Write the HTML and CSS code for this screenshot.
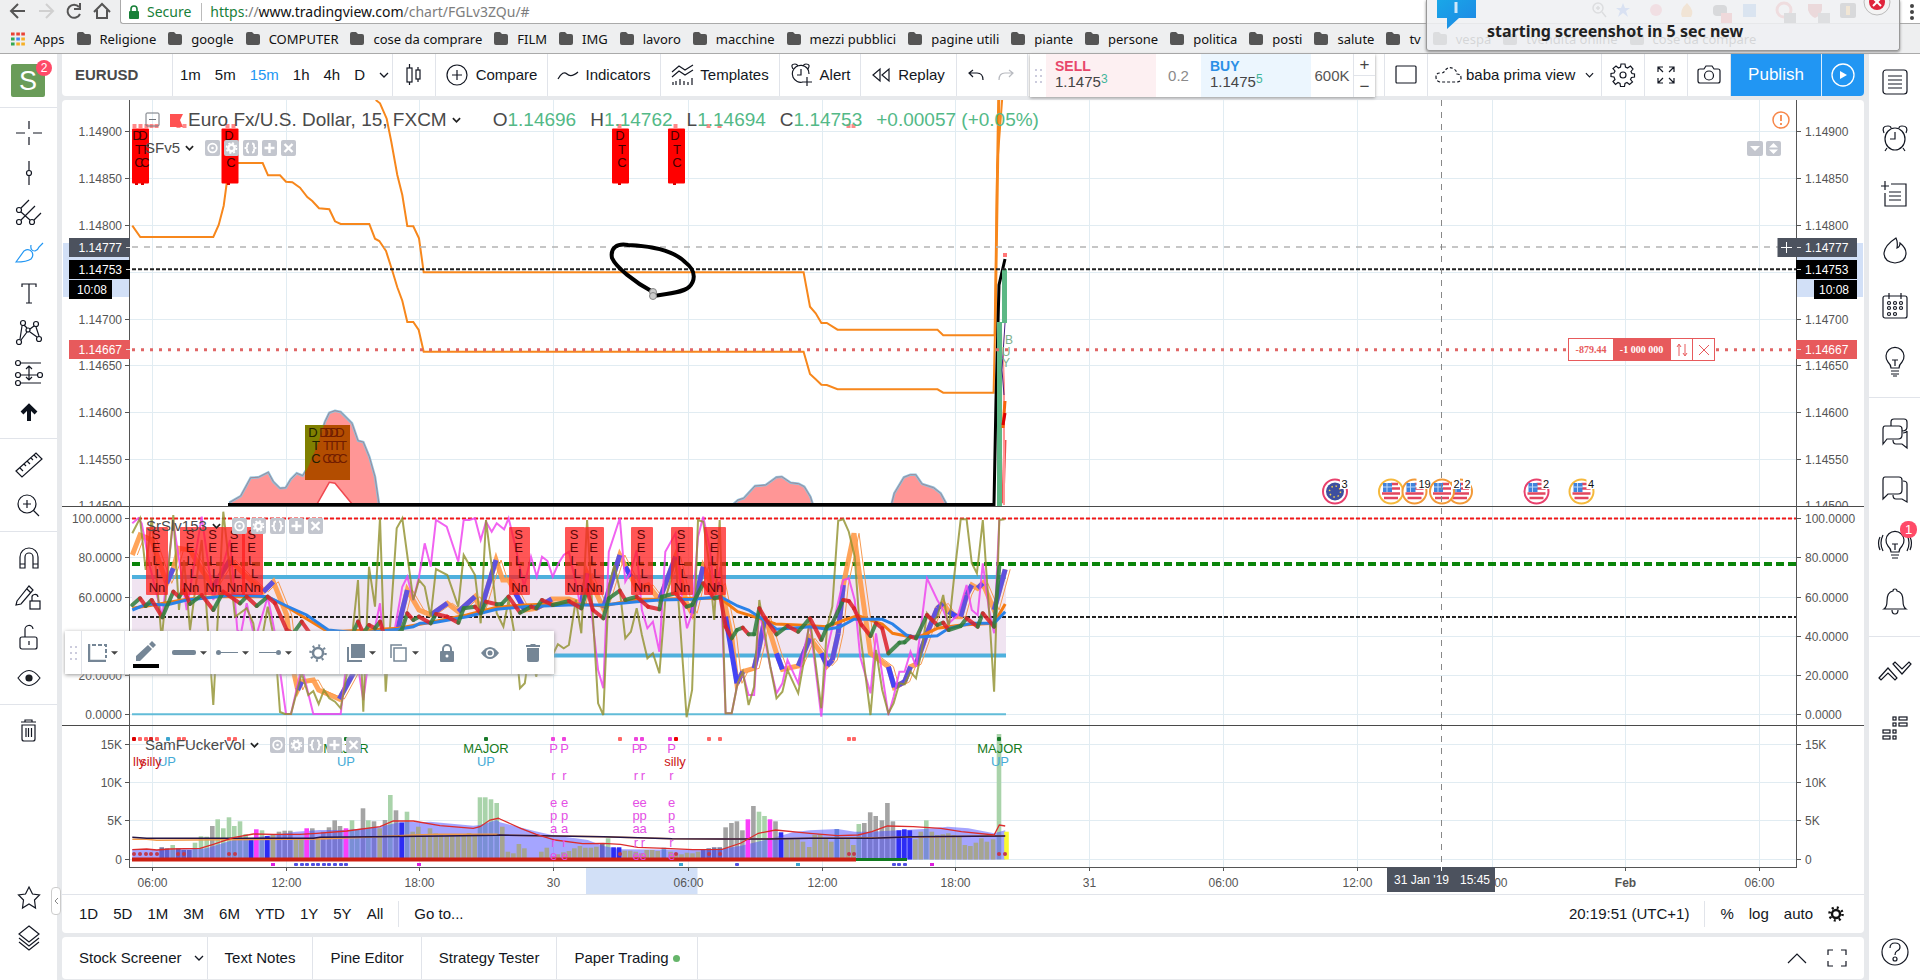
FILE: index.html
```html
<!DOCTYPE html>
<html lang="en">
<head>
<meta charset="utf-8">
<title>EURUSD chart</title>
<link rel="stylesheet" href="styles.css">
</head>
<body>
<svg class="defs" width="0" height="0" aria-hidden="true">
  <symbol id="folder" viewBox="0 0 14 13"><path d="M0 2q0-2 2-2h4l2 2h4q2 0 2 2v7q0 2-2 2H2q-2 0-2-2z" fill="#555"/></symbol>
  <symbol id="chev" viewBox="0 0 10 6"><path d="M1 1l4 4 4-4" fill="none" stroke="currentColor" stroke-width="1.3"/></symbol>
  <symbol id="chev-bold" viewBox="0 0 10 6"><path d="M1 1l4 4 4-4" fill="none" stroke="#222" stroke-width="1.9"/></symbol>
  <symbol id="caret" viewBox="0 0 8 4"><path d="M0 0h8L4 4z" fill="#444"/></symbol>
  <symbol id="l-eye" viewBox="0 0 15 16"><rect width="15" height="16" rx="2" fill="#c3c6ce"/><circle cx="7.5" cy="8" r="4.3" fill="none" stroke="#fff" stroke-width="1.8"/><circle cx="7.5" cy="8" r="1.3" fill="#fff"/></symbol>
  <symbol id="l-gear" viewBox="0 0 15 16"><rect width="15" height="16" rx="2" fill="#c3c6ce"/><circle cx="7.5" cy="8" r="3.2" fill="none" stroke="#fff" stroke-width="2.4"/><circle cx="7.5" cy="8" r="5" fill="none" stroke="#fff" stroke-width="1.6" stroke-dasharray="2 1.93"/></symbol>
  <symbol id="l-code" viewBox="0 0 15 16"><rect width="15" height="16" rx="2" fill="#c3c6ce"/><path d="M6 3.5Q4 3.5 4 5.5V7L2.5 8 4 9v1.5q0 2 2 2M9 3.500q2 0 2 2V7l1.5 1L11 9v1.5q0 2-2 2" fill="none" stroke="#fff" stroke-width="1.8"/></symbol>
  <symbol id="l-plus" viewBox="0 0 15 16"><rect width="15" height="16" rx="2" fill="#c3c6ce"/><path d="M7.5 3v10M2.5 8h10" stroke="#fff" stroke-width="2.4"/></symbol>
  <symbol id="l-x" viewBox="0 0 15 16"><rect width="15" height="16" rx="2" fill="#c3c6ce"/><path d="M3.5 4l8 8M11.5 4l-8 8" stroke="#fff" stroke-width="2.4"/></symbol>
</svg>

<header class="browser">
  <div class="address-row">
    <svg class="nav-icons" width="120" height="24" fill="none" stroke="#555" stroke-width="2">
      <path d="M25 11H12M18 4l-7 7 7 7"/><path d="M39 11h13M46 4l7 7-7 7" stroke="#d0d0d0"/>
      <path d="M79 7a6.5 6.5 0 1 0 1 7M80 3v6h-6"/><path d="M94 12l8-8 8 8M97 10v8h10v-8"/>
    </svg>
    <div class="address">
      <svg width="10" height="14"><rect y="6" width="10" height="8" rx="1" fill="#188038"/><path d="M2 7V4a3 3 0 0 1 6 0v3" fill="none" stroke="#188038" stroke-width="1.6"/></svg>
      <span class="secure">Secure</span><span class="url"><b class="g">https</b>://<b>www.tradingview.com</b>/chart/FGLv3ZQu/#</span>
    </div>
    <svg class="ext-icons" width="330" height="24" fill="none">
      <g stroke="#555" stroke-width="1.5"><circle cx="8" cy="8" r="5"/><path d="M12 12l4 5M6 8h4M8 6v4"/></g>
      <path d="M33 3l2 5h5l-4 3 2 6-5-4-5 4 2-6-4-3h5z" fill="#3975e8"/>
      <circle cx="66" cy="10" r="6" fill="#f67"/><path d="M97 3q8 8 4 14h-9q-3-7 5-14z" fill="#f80"/>
      <rect x="123" y="5" width="14" height="11" rx="4" fill="#333"/><rect x="131" y="13" width="11" height="10" fill="#e33"/>
      <rect x="153" y="4" width="13" height="13" fill="#48d"/><circle cx="194" cy="10" r="7" stroke="#e55" stroke-width="3"/><rect x="194" y="13" width="12" height="10" fill="#555"/>
      <path d="M218 4h14v6q-2 6-7 8-5-2-7-8z" fill="#c33"/><rect x="228" y="13" width="12" height="10" fill="#666"/>
      <rect x="250" y="3" width="16" height="15" rx="2" fill="#333"/><path d="M258 6v9" stroke="#f90" stroke-width="4"/>
      <g fill="#444"><circle cx="322" cy="6" r="2"/><circle cx="322" cy="12" r="2"/><circle cx="322" cy="18" r="2"/></g>
    </svg>
  </div>
  <nav class="bookmarks" aria-label="Bookmarks">
    <a href="#"><svg width="14" height="14"><path d="M0 2h3.6M0 7h0M5.300 2h3.600M10.300 2h3.600" stroke="#e94335" stroke-width="3"/><path d="M0 7h3.600M0 12h3.600" stroke="#34a853" stroke-width="3"/><path d="M5.300 7h3.600" stroke="#4285f4" stroke-width="3"/><path d="M10.300 7h3.600M5.300 12h3.600M10.300 12h3.600" stroke="#f6b026" stroke-width="3"/></svg>Apps</a>
    <a href="#"><svg width="14" height="13"><use href="#folder"/></svg>Religione</a>
    <a href="#"><svg width="14" height="13"><use href="#folder"/></svg>google</a>
    <a href="#"><svg width="14" height="13"><use href="#folder"/></svg>COMPUTER</a>
    <a href="#"><svg width="14" height="13"><use href="#folder"/></svg>cose da comprare</a>
    <a href="#"><svg width="14" height="13"><use href="#folder"/></svg>FILM</a>
    <a href="#"><svg width="14" height="13"><use href="#folder"/></svg>IMG</a>
    <a href="#"><svg width="14" height="13"><use href="#folder"/></svg>lavoro</a>
    <a href="#"><svg width="14" height="13"><use href="#folder"/></svg>macchine</a>
    <a href="#"><svg width="14" height="13"><use href="#folder"/></svg>mezzi pubblici</a>
    <a href="#"><svg width="14" height="13"><use href="#folder"/></svg>pagine utili</a>
    <a href="#"><svg width="14" height="13"><use href="#folder"/></svg>piante</a>
    <a href="#"><svg width="14" height="13"><use href="#folder"/></svg>persone</a>
    <a href="#"><svg width="14" height="13"><use href="#folder"/></svg>politica</a>
    <a href="#"><svg width="14" height="13"><use href="#folder"/></svg>posti</a>
    <a href="#"><svg width="14" height="13"><use href="#folder"/></svg>salute</a>
    <a href="#"><svg width="14" height="13"><use href="#folder"/></svg>tv</a>
    <a href="#"><svg width="14" height="13"><use href="#folder"/></svg>vespa</a>
    <a href="#"><svg width="14" height="13"><use href="#folder"/></svg>tvendita online</a>
    <a href="#"><svg width="14" height="13"><use href="#folder"/></svg>cose da compare</a>
  </nav>
  <div class="notice" role="status">
    <svg class="notice-icon" width="40" height="30"><defs><linearGradient id="nb" x1="0" y1="0" x2="1" y2="1"><stop offset="0" stop-color="#19a7e8"/><stop offset="1" stop-color="#1e86e4"/></linearGradient></defs><path d="M0 0h39v18H22L10 29V18H0z" fill="url(#nb)"/><path d="M19 2v11" stroke="#cfe8fa" stroke-width="3"/></svg>
    <strong>starting screenshot in 5 sec new</strong>
    <button class="notice-close" aria-label="Close"><svg width="28" height="28"><circle cx="14" cy="14" r="13" fill="#f4f4f4" stroke="#bbb"/><circle cx="14" cy="14" r="8" fill="#e0243c"/><path d="M10 10l8 8M18 10l-8 8" stroke="#fff" stroke-width="2"/></svg></button>
  </div>
</header>

<div class="app">
  <aside class="tools">
    <button class="avatar">S<span class="badge">2</span></button>
    <div class="tool-group">
      <button aria-label="Cross"><svg width="30" height="30" class="ln"><path d="M15 3v8M15 19v8M2 15h9M19 15h9"/></svg></button>
      <button aria-label="Line"><svg width="30" height="30" class="ln"><path d="M15 3v9M15 18v9"/><circle cx="15" cy="15" r="2.5"/></svg></button>
      <button aria-label="Pitchfork"><svg width="30" height="30" class="ln"><circle cx="5" cy="12" r="2.5"/><circle cx="5" cy="24" r="2.5"/><circle cx="18" cy="24" r="2.5"/><path d="M7 10l8-8M7 22L21 8M20 22l7-7M7 14l9 8"/></svg></button>
      <button aria-label="Brush"><svg width="30" height="30" class="ln blue"><path d="M2 24L10 13q5-3 8 1 2 4-1 7-4 3-15 3zM17 7q-1 6 4 6 3-1 4-4l4-4"/></svg></button>
      <button aria-label="Text"><svg width="30" height="30" class="ln"><path d="M8 9V6h14v3M15 6v19M12 25h6"/></svg></button>
      <button aria-label="Patterns"><svg width="30" height="30" class="ln"><circle cx="9" cy="5" r="2.5"/><circle cx="22" cy="6" r="2.5"/><circle cx="5" cy="24" r="2.5"/><circle cx="25" cy="21" r="2.5"/><circle cx="14" cy="12" r="2"/><path d="M8 8L6 21M10 7l3 3M16 11l4-3M22 9l3 9M13 14l-6 8M16 14l7 5"/></svg></button>
      <button aria-label="Prediction"><svg width="30" height="30" class="ln"><circle cx="4" cy="5" r="2.5"/><circle cx="4" cy="17" r="2.5"/><circle cx="26" cy="17" r="2.5"/><circle cx="4" cy="25" r="2.5"/><path d="M7 5h20M7 17h17M7 25h20M15 8v13M12 11l3-3 3 3M12 19l3 3 3-3"/></svg></button>
      <button aria-label="Arrow"><svg width="30" height="30"><path d="M15 23V9M8 15l7-7 7 7" fill="none" stroke="#0c121c" stroke-width="4"/></svg></button>
    </div>
    <div class="tool-group">
      <button aria-label="Measure"><svg width="30" height="30" class="ln"><path d="M2 21L22 3l6 6L8 27zM6 18l3 3M10 14l2 2M13 11l3 3M17 8l2 2M20 5l3 3"/></svg></button>
      <button aria-label="Zoom in"><svg width="30" height="30" class="ln"><circle cx="13" cy="14" r="9"/><path d="M19 20l6 6M9 14h8M13 10v8"/></svg></button>
    </div>
    <div class="tool-group">
      <button aria-label="Magnet"><svg width="30" height="30" class="ln"><path d="M6 25V14a9 9 0 0 1 18 0v11h-5V14a4 4 0 0 0-8 0v11zM6 21h5M19 21h5"/></svg></button>
      <button aria-label="Stay in drawing mode"><svg width="30" height="30" class="ln"><path d="M3 18L15 3l4 4L7 21l-5 1zM13 6l4 4"/><rect x="16" y="18" width="10" height="8"/><path d="M18 18v-3a3 3 0 0 1 6-1"/></svg></button>
      <button aria-label="Lock drawings"><svg width="30" height="30" class="ln"><rect x="6" y="14" width="17" height="12" rx="2"/><path d="M11 14V7a4 4 0 0 1 8-1M15 18v4"/></svg></button>
      <button aria-label="Hide drawings"><svg width="30" height="30" class="ln"><path d="M4 15q11-15 22 0-11 15-22 0z"/><circle cx="15" cy="15" r="3" fill="#222"/></svg></button>
    </div>
    <div class="tool-group">
      <button aria-label="Remove"><svg width="30" height="30" class="ln"><path d="M7 6h15M11 6V4h7v2M8 9v14q0 2 2 2h9q2 0 2-2V9zM12 12v9M14.5 12v9M17.5 12v9"/></svg></button>
    </div>
    <div class="tool-group end">
      <button aria-label="Favorites"><svg width="30" height="30" class="ln"><path d="M15 4l3.500 7 7 1-5 5 1 8-6.500-4-6.500 4 1-8-5-5 7-1z"/></svg></button>
      <button aria-label="Object tree"><svg width="30" height="30" class="ln"><path d="M15 3l10 8-10 8-10-8zM5 15l10 8 10-8M5 19l10 8 10-8"/></svg></button>
    </div>
    <button class="collapse" aria-label="Collapse"><svg width="5" height="8"><path d="M4 1L1 4l3 3" fill="none" stroke="#888"/></svg></button>
  </aside>

  <main class="main">
    <div class="topbar">
      <div class="cell symbol"><strong>EURUSD</strong></div>
      <div class="cell intervals"><button>1m</button><button>5m</button><button class="on">15m</button><button>1h</button><button>4h</button><button>D</button><button aria-label="More intervals"><svg width="10" height="6"><use href="#chev"/></svg></button></div>
      <button class="cell w43" aria-label="Candles"><svg width="18" height="26" class="ln"><rect x="2" y="6" width="5" height="14"/><rect x="11" y="8" width="4" height="9"/><path d="M4.5 2v4M4.5 20v3M13 5v3M13 17v3"/></svg></button>
      <button class="cell w112"><svg width="22" height="22" class="ln"><circle cx="11" cy="11" r="10"/><path d="M6 11h10M11 6v10"/></svg>Compare</button>
      <button class="cell w114"><svg width="22" height="12" class="ln"><path d="M1 10Q6 1 10 5t11-2"/></svg>Indicators</button>
      <button class="cell w118"><svg width="23" height="22" class="ln"><path d="M1 8l7-6 6 4 8-5M1 13l7-6 6 4 8-5M2 21v-3M5 21v-4M9 21v-6M13 21v-4M17 21v-3M21 21v-7"/></svg>Templates</button>
      <button class="cell w81"><svg width="23" height="24" class="ln"><path d="M17 5a8.5 8.5 0 1 0-4 14M19 11q0-4-2-6M11 6v6H7M3 6Q0 1 5 1q2 0 3 2M13 3q1-2 3-2 5 0 2 5M12 19h10M17 14v9"/></svg>Alert</button>
      <button class="cell w97"><svg width="18" height="14" class="ln"><path d="M8 1v12L1 7zM17 1v12l-7-6z"/></svg>Replay</button>
      <div class="cell history"><button aria-label="Undo"><svg width="16" height="12" class="ln"><path d="M5 1L1 4l4 4M1 4h8q6 0 6 7"/></svg></button><button aria-label="Redo"><svg width="16" height="12" class="ln faint"><path d="M11 1l4 3-4 4M15 4H7q-6 0-6 7"/></svg></button></div>
      <div class="spacer"></div>
      <button class="cell w43 first" aria-label="Layout"><svg width="22" height="20" class="ln"><rect x="1" y="1" width="20" height="17" rx="1"/></svg></button>
      <button class="cell layout"><svg width="27" height="18" class="ln" stroke-dasharray="3 2"><path d="M5 16q-4-1-4-5t4-4q3 0 4-1 4-7 10-3 3 2 3 5 4 0 4 4t-4 4z"/></svg>baba prima view<svg class="push" width="9" height="6"><use href="#chev"/></svg></button>
      <button class="cell w43" aria-label="Settings"><svg width="24" height="24" class="ln"><circle cx="12" cy="12" r="3"/><path d="M10 1h4l.5 3 2 1 3-2 2.5 3-2 2.500 1 2 2.500.5v3l-3 .5-1 2 2 2.500-3 2.500-2.500-2-2 1-.5 3h-4l-.5-3-2-1-2.500 2-2.500-3 2-2-1-2.500-3-.5v-3l3-.5 1-2-2-2.500 3-2.500 2.500 2 2-1z"/></svg></button>
      <button class="cell w43" aria-label="Fullscreen"><svg width="20" height="20" class="ln"><path d="M2 7V2h5M2 2l5 5M13 2h5v5M18 2l-5 5M2 13v5h5M2 18l5-5M18 13v5h-5M18 18l-5-5"/></svg></button>
      <button class="cell w43" aria-label="Snapshot"><svg width="24" height="20" class="ln"><path d="M3 4h4l2-3h6l2 3h4q2 0 2 2v10q0 2-2 2H3q-2 0-2-2V6q0-2 2-2z"/><circle cx="12" cy="10.5" r="4.5"/></svg></button>
      <button class="publish">Publish</button>
      <button class="stream" aria-label="Start stream"><svg width="24" height="24"><circle cx="12" cy="12" r="11" fill="none" stroke="#fff" stroke-width="1.3"/><path d="M9 8l7 4-7 4z" fill="#fff"/></svg></button>

      <div class="trade">
        <svg class="grip" width="9" height="16"><path d="M2 1v16M7 1v16" stroke="#ccd" stroke-width="2" stroke-dasharray="2 4"/></svg>
        <button class="sell"><b>SELL</b><span>1.1475<sup>3</sup></span></button>
        <span class="spread">0.2</span>
        <button class="buy"><b>BUY</b><span>1.1475<sup>5</sup></span></button>
        <input class="qty" aria-label="Quantity" value="600K">
        <span class="steps"><button aria-label="Increase">+</button><button aria-label="Decrease">−</button></span>
      </div>
    </div>

    <section class="card">
      <div class="chart">
        <svg id="axis-left" class="axis"></svg>
        <svg id="plot" class="plot"></svg>
        <svg id="axis-right" class="axis"></svg>

        <div class="legend legend-main">
          <svg width="16" height="16"><rect x="1" y="1" width="13" height="13" rx="1" fill="none" stroke="#70757d"/><path d="M4 7.5h7" stroke="#70757d"/></svg>
          <svg class="flag" width="13" height="13"><path d="M0 0h13l-3 6 3 7H0z" fill="#ff5252"/></svg>
          <span>Euro Fx/U.S. Dollar, 15, FXCM</span><svg class="dd" width="9" height="6"><use href="#chev-bold"/></svg>
          <span class="ohlc">O<i>1.14696</i></span><span class="ohlc">H<i>1.14762</i></span><span class="ohlc">L<i>1.14694</i></span><span class="ohlc">C<i>1.14753</i></span><span class="ohlc"><i>+0.00057 (+0.05%)</i></span>
        </div>
        <div class="legend legend-1"><span>SFv5</span><svg class="dd" width="9" height="6"><use href="#chev-bold"/></svg>
          <button aria-label="Hide"><svg width="15" height="16"><use href="#l-eye"/></svg></button><button aria-label="Format"><svg width="15" height="16"><use href="#l-gear"/></svg></button><button aria-label="Source"><svg width="15" height="16"><use href="#l-code"/></svg></button><button aria-label="Add"><svg width="15" height="16"><use href="#l-plus"/></svg></button><button aria-label="Remove"><svg width="15" height="16"><use href="#l-x"/></svg></button></div>
        <div class="legend legend-2"><span>SrSlv153</span><svg class="dd" width="9" height="6"><use href="#chev-bold"/></svg>
          <button aria-label="Hide"><svg width="15" height="16"><use href="#l-eye"/></svg></button><button aria-label="Format"><svg width="15" height="16"><use href="#l-gear"/></svg></button><button aria-label="Source"><svg width="15" height="16"><use href="#l-code"/></svg></button><button aria-label="Add"><svg width="15" height="16"><use href="#l-plus"/></svg></button><button aria-label="Remove"><svg width="15" height="16"><use href="#l-x"/></svg></button></div>
        <div class="legend legend-3"><span>SamFUckerVol</span><svg class="dd" width="9" height="6"><use href="#chev-bold"/></svg>
          <button aria-label="Hide"><svg width="15" height="16"><use href="#l-eye"/></svg></button><button aria-label="Format"><svg width="15" height="16"><use href="#l-gear"/></svg></button><button aria-label="Source"><svg width="15" height="16"><use href="#l-code"/></svg></button><button aria-label="Add"><svg width="15" height="16"><use href="#l-plus"/></svg></button><button aria-label="Remove"><svg width="15" height="16"><use href="#l-x"/></svg></button></div>

        <svg class="warn" width="20" height="20"><circle cx="10" cy="10" r="8" fill="none" stroke="#f7874a" stroke-width="1.5"/><path d="M10 5v6M10 13v2" stroke="#f7874a" stroke-width="1.8"/></svg>
        <svg class="pane-btns" width="34" height="15"><rect width="16" height="15" rx="2" fill="#c3c6ce"/><rect x="19" width="15" height="15" rx="2" fill="#c3c6ce"/><path d="M3 5h10l-5 5zM22 6.500h9L26.500 2zM22 8.500h9L26.500 13z" fill="#fff"/></svg>

        <div class="position"><span>-879.44</span><b>-1 000 000</b><button aria-label="Reverse"><svg width="12" height="14"><path d="M3 13V2M1 4l2-3 2 3M9 1v11M7 10l2 3 2-3" fill="none" stroke="#e75a5c"/></svg></button><button aria-label="Close position"><svg width="12" height="12"><path d="M1 1l10 10M11 1L1 11" stroke="#e75a5c"/></svg></button></div>

        <div class="drawbar">
          <svg class="grip" width="9" height="16"><path d="M2 1v16M7 1v16" stroke="#ccd" stroke-width="2" stroke-dasharray="2 4"/></svg>
          <button aria-label="Template"><svg width="19" height="18"><path d="M1 0v17h17" fill="none" stroke="#758696" stroke-width="2.5"/><path d="M4 1h14v13" fill="none" stroke="#758696" stroke-width="2" stroke-dasharray="4 2"/></svg><svg width="7" height="4"><use href="#caret"/></svg></button>
          <button aria-label="Line color" class="pencil"><svg width="20" height="20"><path d="M0 20v-5L12 4l4 4L4 20zM13 3l3-3 4 4-3 3z" fill="#758696"/></svg></button>
          <button aria-label="Thickness"><svg width="24" height="5"><rect width="24" height="5" rx="2" fill="#758696"/></svg><svg width="7" height="4"><use href="#caret"/></svg></button>
          <button aria-label="Left end"><svg width="22" height="5"><circle cx="2.5" cy="2.5" r="2.5" fill="#758696"/><path d="M4 2.5h18" stroke="#758696"/></svg><svg width="7" height="4"><use href="#caret"/></svg></button>
          <button aria-label="Right end"><svg width="22" height="5"><circle cx="19.5" cy="2.5" r="2.5" fill="#758696"/><path d="M0 2.5h18" stroke="#758696"/></svg><svg width="7" height="4"><use href="#caret"/></svg></button>
          <button aria-label="Format"><svg width="18" height="18"><circle cx="9" cy="9" r="5" fill="none" stroke="#758696" stroke-width="2.5"/><circle cx="9" cy="9" r="7.5" fill="none" stroke="#758696" stroke-width="2.5" stroke-dasharray="2 3.89"/></svg></button>
          <button aria-label="Order"><svg width="18" height="18"><rect x="4" width="14" height="14" fill="#758696"/><path d="M1 3v14h14" fill="none" stroke="#758696" stroke-width="2"/></svg><svg width="7" height="4"><use href="#caret"/></svg></button>
          <button aria-label="Clone"><svg width="18" height="18" fill="none" stroke="#758696" stroke-width="1.5"><rect x="4" y="4" width="12" height="13"/><path d="M1 14V1h11"/></svg><svg width="7" height="4"><use href="#caret"/></svg></button>
          <button aria-label="Lock"><svg width="14" height="18"><rect y="7" width="14" height="11" rx="1" fill="#758696"/><path d="M3 8V5a4 4 0 0 1 8 0v3" fill="none" stroke="#758696" stroke-width="2"/><circle cx="7" cy="12" r="1.5" fill="#fff"/></svg></button>
          <button aria-label="Hide"><svg width="18" height="12"><path d="M0 6q9-12 18 0-9 12-18 0z" fill="#758696"/><circle cx="9" cy="6" r="4" fill="#fff"/><circle cx="9" cy="6" r="2.5" fill="#758696"/></svg></button>
          <button aria-label="Delete"><svg width="14" height="18"><path d="M0 1h4l1-1h4l1 1h4v2H0zM1 4h12v12q0 2-2 2H3q-2 0-2-2z" fill="#758696"/></svg></button>
        </div>
      </div>

      <div class="ranges">
        <button>1D</button><button>5D</button><button>1M</button><button>3M</button><button>6M</button><button>YTD</button><button>1Y</button><button>5Y</button><button>All</button>
        <i class="rule"></i><button class="goto">Go to...</button>
        <span class="clock">20:19:51 (UTC+1)</span><i class="rule"></i><button>%</button><button>log</button><button>auto</button>
        <button aria-label="Scale settings"><svg width="16" height="16"><circle cx="8" cy="8" r="4" fill="none" stroke="#111" stroke-width="2.4"/><circle cx="8" cy="8" r="6.5" fill="none" stroke="#111" stroke-width="2.6" stroke-dasharray="2 3.105"/></svg></button>
      </div>
    </section>

    <nav class="tabs">
      <button>Stock Screener<svg class="gap" width="10" height="6"><use href="#chev"/></svg></button><button>Text Notes</button><button>Pine Editor</button><button>Strategy Tester</button><button>Paper Trading<i class="dot"></i></button>
      <button class="bare push" aria-label="Expand"><svg width="20" height="12" class="ln"><path d="M1 11l9-9 9 9"/></svg></button>
      <button class="bare" aria-label="Maximize"><svg width="20" height="18" class="ln"><path d="M1 6V1h5M14 1h5v5M1 12v5h5M19 12v5h-5"/></svg></button>
    </nav>
  </main>

  <aside class="side">
    <div class="side-group">
      <button aria-label="Watchlist"><svg width="28" height="28" class="ln"><rect x="2" y="2" width="24" height="24" rx="3"/><path d="M7 8h14M7 12h14M7 16h14M7 20h14"/></svg></button>
      <button aria-label="Alerts"><svg width="28" height="28" class="ln"><ellipse cx="14" cy="15" rx="10" ry="11"/><path d="M14 8v7H9M3 9Q0 2 7 2q3 0 3 2M25 9q3-7-4-7-3 0-3 2M6 24l-2 3M22 24l2 3"/></svg></button>
      <button aria-label="Data window"><svg width="28" height="28" class="ln"><path d="M10 4h15v22H4V13M0 6h8M4 1v9M8 12h12M8 16h12M8 20h12"/></svg></button>
      <button aria-label="Hotlists"><svg width="28" height="28" class="ln"><path d="M15 2q2 4 1 10 3-1 3-5 6 5 6 10 0 9-11 10Q3 26 3 17q1-8 12-15z"/></svg></button>
      <button aria-label="Calendar"><svg width="28" height="28" class="ln"><rect x="2" y="4" width="24" height="22" rx="2"/><path d="M8 1v6M20 1v6"/><g><circle cx="8" cy="11" r="1.5"/><circle cx="14" cy="11" r="1.5"/><circle cx="20" cy="11" r="1.5"/><circle cx="8" cy="16" r="1.5"/><circle cx="14" cy="16" r="1.5"/><circle cx="20" cy="16" r="1.5"/><circle cx="8" cy="22" r="1.5"/><circle cx="14" cy="22" r="1.5"/></g></svg></button>
      <button aria-label="My ideas"><svg width="28" height="28" class="ln"><path d="M10 20q0-3-3-6a9 9 0 1 1 14 0q-3 3-3 6zM10 23h8M10 26h8M11 12h6M14 12v6M12 28h4"/></svg></button>
    </div>
    <div class="side-group">
      <button aria-label="Public chats"><svg width="28" height="30" class="ln"><path d="M10 8V4q0-3 3-3h10q3 0 3 3v5q0 4-5 4M4 8h14q3 0 3 3v6q0 4-4 4H6l-4 5V11q0-3 2-3zM22 15q3 0 4-2v17l-5-4h-6q-3 0-3-4"/></svg></button>
      <button aria-label="Private chats"><svg width="28" height="28" class="ln"><path d="M4 2h14q3 0 3 3v10q0 4-4 4H7l-5 5V5q0-3 2-3zM22 6q4 0 4 3v18l-5-3h-6q-3 0-3-4"/></svg></button>
      <button aria-label="Ideas stream"><svg width="34" height="30" class="ln"><path d="M13 22q0-3-3-6a9 9 0 1 1 14 0q-3 3-3 6zM13 25h8M14 28h6M14 14h6M17 14v6M5 5q-4 8 0 16M2 7q-3 6 0 13M29 5q4 8 0 16M32 7q3 6 0 13"/></svg><span class="badge">1</span></button>
      <button aria-label="Notifications"><svg width="28" height="28" class="ln"><path d="M3 22q3-2 3-8 0-9 6-10 0-2 2-2t2 2q6 1 6 10 0 6 3 8zM11 23q0 4 3 4t3-4"/></svg></button>
    </div>
    <div class="side-group">
      <button aria-label="Order panel"><svg width="34" height="24" class="ln"><path d="M1 18l9-10 9 10-2 2-7-7-7 7zM15 4l2-2 7 7 7-7 2 2-9 10z"/></svg></button>
      <button aria-label="DOM"><svg width="28" height="28" class="ln"><g><rect x="12" y="3" width="3" height="3"/><rect x="18" y="3" width="8" height="3"/><rect x="12" y="9" width="3" height="3"/><rect x="18" y="9" width="8" height="3"/><rect x="2" y="16" width="7" height="3"/><rect x="12" y="16" width="3" height="3"/><rect x="2" y="22" width="7" height="3"/><rect x="12" y="22" width="3" height="3"/></g></svg></button>
    </div>
    <div class="side-group end"><button aria-label="Help"><svg width="30" height="30" class="ln"><circle cx="15" cy="15" r="13"/><path d="M10 11q0-5 5-5t5 4q0 3-3 4-2 1-2 4"/><circle cx="15" cy="22" r="2"/></svg></button></div>
  </aside>
</div>
<script src="chart.js"></script>
</body>
</html>
```
FILE: styles.css
```css
* { box-sizing: border-box; }
body { margin: 0; height: 100vh; display: flex; flex-direction: column; overflow: hidden; background: #e7e9ec; color: #131722; font: 15px/18px "Liberation Sans", Arial, sans-serif; }
button, input { font: inherit; color: inherit; background: none; border: 0; padding: 0; margin: 0; }
button { display: flex; align-items: center; justify-content: center; white-space: nowrap; flex: none; }
svg { flex: none; display: block; }
.defs { position: absolute; }
.ln { fill: none; stroke: #131722; stroke-width: 1.2; overflow: visible; }
.ln.blue { stroke: #2196f3; }
.ln.faint { stroke: #b8bac0; }
.push { margin-left: auto; }

.browser { position: relative; flex: none; background: #eeeff0; border-bottom: 1px solid #aaa; font-family: "Noto Sans", sans-serif; }
.address-row { height: 24px; display: flex; overflow: hidden; }
.address { flex: 1; background: #fff; border: 1px solid #aaa; border-top: 0; border-right: 0; border-radius: 0 0 0 3px; display: flex; align-items: center; padding-left: 8px; }
.secure { color: #188038; margin-left: 8px; padding-right: 10px; border-right: 1px solid #bbb; font-size: 14px; }
.url { color: #7d7d7d; margin-left: 8px; font-size: 14px; }
.url b { font-weight: 400; color: #111; }
.url b.g { color: #188038; }
.ext-icons { background: #fff; border-bottom: 1px solid #aaa; margin-left: -1px; }
.bookmarks { height: 29px; display: flex; align-items: center; gap: 12px; padding-left: 11px; overflow: hidden; font-size: 13px; }
.bookmarks a { display: flex; align-items: center; gap: 9px; color: #111; text-decoration: none; white-space: nowrap; }
.notice { position: absolute; z-index: 5; right: 20px; top: 0; width: 474px; height: 51px; background: rgba(239, 240, 242, .88); border: 1px solid #999; border-top: 0; border-radius: 0 0 3px 3px; box-shadow: 0 1px 3px #888; display: flex; align-items: flex-start; padding: 0 0 0 10px; gap: 10px; }
.notice strong { font-size: 16px; line-height: 20px; margin-top: 21px; color: #222; }
.notice-close { position: absolute; right: 8px; top: -12px; }

.app { flex: 1; min-height: 0; display: flex; }
.tools, .side { background: #fff; flex: none; display: flex; flex-direction: column; align-items: stretch; position: relative; }
.tools { width: 57px; margin-right: 5px; }
.avatar { position: relative; width: 34px; height: 33px; margin: 10px 0 10px 11px; background: #6a9c59; color: #fff; font-size: 27px; border-radius: 2px; }
.badge { position: absolute; right: -7px; top: -4px; width: 16px; height: 16px; border-radius: 8px; background: #ff4a68; color: #fff; font-size: 12px; line-height: 16px; text-align: center; }
.tool-group { border-top: 1px solid #e1e4ea; padding: 6px 0; }
.tool-group button { width: 57px; height: 40px; }
.avatar + .tool-group { padding: 5px 0; }
.tool-group.end { margin-top: auto; border: 0; padding-bottom: 22px; }
.collapse { position: absolute; right: -4px; top: 833px; width: 10px; height: 28px; background: #fff; border: 1px solid #ccc; border-radius: 4px; }

.main { flex: 1; min-width: 0; display: flex; flex-direction: column; gap: 4px; padding-bottom: 1px; }
.topbar { position: relative; height: 42px; flex: none; display: flex; background: #fff; border-radius: 0 0 4px 4px; }
.cell { border-right: 1px solid #e1e4ea; display: flex; align-items: center; justify-content: center; gap: 8px; flex: none; }
.symbol { width: 111px; justify-content: flex-start; padding-left: 13px; color: #4a4a4a; }
.intervals { width: 220px; gap: 14px; padding: 0 0 0 4px; }
.intervals .on { color: #2196f3; }
.w43 { width: 43px; }
.w112 { width: 112px; }
.w114 { width: 113px; gap: 6px; }
.w118 { width: 119px; gap: 6px; }
.w81 { width: 81px; gap: 7px; }
.w97 { width: 96px; }
.history { width: 71px; gap: 14px; padding-right: 2px; }
.spacer { flex: 1; }
.first { border-left: 1px solid #e1e4ea; width: 44px; }
.layout { width: 174px; padding: 0 7px; gap: 4px; }
.publish { width: 91px; background: #2196f3; color: #fff; font-size: 17px; border-right: 1px solid #d9edfd; }
.stream { width: 42px; background: #2196f3; border-radius: 0 0 4px 0; }
.trade { position: absolute; left: 968px; top: 0; width: 345px; height: 43px; background: #fff; display: flex; align-items: stretch; box-shadow: 0 1px 3px #999; }
.grip { align-self: center; margin: 0 3px 0 4px; }
.trade button { color: #444; }
.trade .sell, .trade .buy { width: 110px; flex-direction: column; align-items: flex-start; line-height: 16px; padding: 0 0 3px 9px; background: #fdf0f2; }
.trade .buy { background: #ecf6fe; }
.sell b { color: #e8476a; font-size: 14px; }
.buy b { color: #2b8fe6; font-size: 14px; }
.trade sup { font-size: 12px; line-height: 8px; color: #3fb59a; vertical-align: 4px; }
.spread { width: 45px; color: #8a8a8a; line-height: 43px; text-align: center; }
.qty { width: 42px; text-align: center; color: #555; }
.steps { display: flex; flex-direction: column; width: 22px; border-left: 1px solid #e1e4ea; }
.steps button { flex: 1; font-size: 17px; }
.steps button + button { border-top: 1px solid #e1e4ea; }

.card { flex: 1; min-height: 0; background: #fff; border-radius: 4px; display: flex; flex-direction: column; overflow: hidden; }
.chart { flex: 1; min-height: 0; position: relative; display: flex; }
.axis { width: 68px; height: 100%; }
.plot { flex: 1; min-width: 0; height: 100%; }
.chart text { fill: #555; font-size: 12px; }
.legend { position: absolute; display: flex; align-items: center; color: #4a4a4a; height: 20px; white-space: nowrap; }
.legend .dd { margin-left: 5px; }
.legend button { margin-left: 4px; }
.legend .dd + button { margin-left: 11px; }
.legend-main { left: 83px; top: 10px; font-size: 19px; }
.flag { margin: 0 5px 0 9px; }
.legend i { font-style: normal; color: #53b987; }
.ohlc { margin-left: 14px; }
.dd + .ohlc { margin-left: 32px; }
.legend-1 { left: 83px; top: 38px; }
.legend-2 { left: 84px; top: 416px; }
.legend-3 { left: 83px; top: 635px; }
.warn { position: absolute; right: 73px; top: 10px; }
.pane-btns { position: absolute; right: 83px; top: 41px; }
.position { position: absolute; left: 1506px; top: 238px; height: 23px; display: flex; border: 1px solid #e75a5c; background: #fff; font: 10px/21px "Liberation Serif", serif; color: #e75a5c; }
.position span { width: 44px; text-align: center; font-weight: 700; }
.position b { width: 57px; background: #e75a5c; color: #fff; text-align: center; }
.position button { width: 22px; border-left: 1px solid #e75a5c; }
.drawbar { position: absolute; left: 3px; top: 531px; height: 43px; background: #fff; display: flex; box-shadow: 0 1px 4px #999; }
.drawbar button { width: 43px; border-left: 1px solid #e1e4ea; gap: 4px; }
.drawbar .pencil { position: relative; }
.pencil::after { content: ""; position: absolute; left: 8px; right: 8px; bottom: 6px; height: 4px; background: #000; }
.pencil svg { margin-bottom: 4px; }

.ranges { height: 39px; flex: none; border-top: 1px solid #e1e4ea; display: flex; align-items: center; gap: 15px; padding: 0 20px 0 17px; }
.rule { width: 1px; height: 26px; background: #e1e4ea; }
.clock { margin-left: auto; }
.tabs { height: 42px; flex: none; background: #fff; border-radius: 4px; display: flex; }
.tabs button { padding: 0 17px; border-right: 1px solid #e1e4ea; }
.tabs button:first-child { padding-right: 3px; }
.tabs .bare { border: 0; padding: 0 17px 0 3px; }
.gap { margin-left: 12px; }
.dot { width: 7px; height: 7px; border-radius: 4px; background: #66b56a; margin-left: 4px; }
.side { width: 51px; margin-left: 5px; }
.side-group button { position: relative; width: 52px; height: 56px; }
.side-group + .side-group { border-top: 1px solid #e1e4ea; margin-top: 7px; padding-top: 7px; }
.side-group .badge { right: 4px; top: 4px; width: 17px; height: 17px; line-height: 17px; font-size: 13px; }
.side .end { margin-top: auto; border: 0; }
```
FILE: chart.js
```javascript
const el = (tag, attrs = {}, body = '') =>
  `<${tag} ${Object.entries(attrs).map(([k, v]) => `${k}="${v}"`).join(' ')}>${body}</${tag}>`;

// Series are stored in two halves, each in its own fine grid: [x scale, x origin, y origin].
const A1 = [3, 0, 100], B1 = [2.8, 480, 100];
const A2 = [3, 0, 500], B2 = [2.904, 500, 500];
const A3 = [3, 0, 715], B3 = [2.904, 500, 715];
const px = (s, [k, ox, oy]) => s.trim().split(/\s+/).map(p => {
  const [x, y] = p.split(',').map(Number);
  return [ox + x / k, oy + y / 3];
});
const str = pts => pts.map(p => p.map(n => n.toFixed(1)).join()).join(' ');
const line = (pts, stroke, w = 1, extra = {}) =>
  el('polyline', { points: str(pts), fill: 'none', stroke, 'stroke-width': w, ...extra });
const area = (pts, fill, base) =>
  el('polygon', { points: str([[pts[0][0], base], ...pts, [pts[pts.length - 1][0], base]]), fill });
const rect = (x, y, w, h, fill, extra = {}) => el('rect', { x, y, width: w, height: h, fill, ...extra });
const hl = (x1, x2, y, stroke, w = 1, dash = 'none') =>
  el('line', { x1, x2, y1: y, y2: y, stroke, 'stroke-width': w, 'stroke-dasharray': dash });
const vl = (x, y1, y2, stroke, w = 1, dash = 'none') =>
  el('line', { x1: x, x2: x, y1, y2, stroke, 'stroke-width': w, 'stroke-dasharray': dash });
const text = (x, y, s, style = '', anchor = 'middle') => el('text', { x, y, 'text-anchor': anchor, style }, s);

const priceRows = [['1.14900', 131.5], ['1.14850', 178.5], ['1.14800', 225.5], ['', 272.5], ['1.14700', 319.5], ['1.14650', 365.5], ['1.14600', 412.5], ['1.14550', 459.5]];
const oscRows = [['100.0000', 518.5], ['80.0000', 557.5], ['60.0000', 597.5], ['40.0000', 636.5], ['20.0000', 675.5], ['0.0000', 714.5]];
const volRows = [['15K', 744.5], ['10K', 782.5], ['5K', 820.5], ['0', 859.5]];
const rows = [...priceRows, ...oscRows, ...volRows];
const times = [[152.5, '06:00'], [286.5, '12:00'], [419.5, '18:00'], [553.5, '30'], [688.5, '06:00'], [822.5, '12:00'], [955.5, '18:00'], [1089.5, '31'], [1223.5, '06:00'], [1357.5, '12:00'], [1492.5, '18:00'], [1625.5, 'Feb'], [1759.5, '06:00']];
const FAR = 4000;

function plot() {
  let o = '';
  times.forEach(([x]) => o += vl(x, 100, 868, '#e1ecf2'));
  rows.forEach(([, y]) => o += hl(130, FAR, y, '#e1ecf2'));

  // price pane
  const hillsA = px('688,1208 722,1188 752,1133 775,1132 805,1117 820,1145 840,1165 857,1163 872,1138 890,1120 908,1127 925,1100 950,1040 975,965 988,938 1005,932 1022,936 1056,970 1074,1022 1090,1026 1108,1070 1125,1130 1137,1212', A1);
  const hillsB = px('710,1212 722,1200 738,1195 770,1158 800,1155 830,1132 845,1130 870,1148 892,1151 908,1160 925,1190 932,1214', B1);
  const hillsC = px('1152,1214 1160,1180 1187,1132 1205,1124 1220,1124 1238,1152 1270,1163 1290,1180 1307,1214', B1);
  [hillsA, hillsB, hillsC].forEach(h => o += area(h, '#ff9696', 505) + line(h, '#8fc3dc', 2.5) + line(h, '#9c8a9c', 1));
  o += rect(305, 425, 45, 55, '#808000');
  o += el('polygon', { points: str(px('915,1118 925,1100 950,1040 972,975 1050,975 1050,1140 915,1140', A1)), fill: '#b34d00' });
  const peak = px('950,1214 988,1147 1005,1150 1058,1214', A1);
  o += area(peak, '#fff', 505) + line(peak, '#f04850', 1.5);
  [313, 324, 329, 334, 340].forEach((x, i) => {
    const s = `fill:${i ? '#701c00' : '#222200'};font-size:13px`;
    o += text(x, 437, 'D', s) + text(x + 3, 450, 'T', s) + text(x + 3, 463, 'C', s);
  });
  const upA = px('1127,0 1140,10 1160,56 1174,125 1192,225 1207,285 1222,378 1240,379 1257,415 1271,517', A1);
  const upB = px('906,517 924,620 940,640 956,669 971,669 1001,689 1281,689 1297,706 1441,706 1446,340 1451,0', B1);
  const lowA = px('397,377 421,411 640,411 656,375 671,317 680,250 700,190 716,189 788,189 804,226 840,226 858,245 877,247 900,263 922,291 937,303 957,325 988,328 1005,364 1022,372 1108,372 1125,416 1138,423 1158,453 1176,509 1192,562 1207,602 1222,666 1240,666 1256,690 1271,755', A1);
  const lowB = px('906,755 924,822 940,838 956,854 971,855 1001,868 1281,868 1297,878 1438,878 1443,640 1448,200 1462,0', B1);
  o += line([...upA, ...upB], '#f7871c', 2) + line([...lowA, ...lowB], '#f7871c', 2);
  o += line(px('1443,706 1452,100 1454,0', B1), '#f7871c', 2);
  o += line([[228, 504.5], [994, 504.5], [996, 400], [999, 285], [1005, 259]], '#000', 3);
  o += line(px('1470,1020 1464,1210', B1), '#f05050', 3) + area(px('1464,700 1470,850', B1), '#ff9696', 505);
  o += rect(997, 322, 5, 184, '#5cb885') + rect(1002, 269, 5, 54, '#5cb885');
  o += line([[1005, 323], [1002, 370], [1004, 395]], '#4a2080', 1) + line([[1005, 401], [1003, 428]], '#f7640c', 3) + line([[1005, 413], [1003, 425]], '#d00', 3);
  o += text(1009, 344, 'B', 'fill:#7bb08a') + text(1006, 356, 'U', 'fill:#7bb08a') + text(1006, 367, 'Y', 'fill:#7bb08a');
  o += rect(1003, 253, 4, 4, '#f77');
  [[132, 17, [136, 142]], [221.5, 17, [228]], [612, 17, [619]], [668, 17, [674]]].forEach(([x, w, cols]) => {
    o += rect(x, 128.5, w, 55, '#f00', { rx: 1 });
    cols.forEach(c => {
      o += text(c + 1, 140, 'D', 'fill:#400;font-size:13px') + text(c + 3, 154, 'T', 'fill:#400;font-size:13px') + text(c + 3, 167, 'C', 'fill:#400;font-size:13px') + rect(c - 1, 183, 3, 2, '#d00');
    });
  });
  [134, 140, 146, 151, 156, 178, 184, 227, 233, 619, 675, 708, 719, 848, 853].forEach(x => o += rect(x - 1.5, 124, 4, 4, '#f88'));
  o += hl(132, FAR, 247, '#b4b4b4', 1.5, '6 6') + hl(132, FAR, 269.3, '#222', 2, '4 2');
  o += hl(132, FAR, 349.7, '#e06666', 3, '3 6');
  o += el('path', { d: 'M653 292C634 282 616 267 612 258C610 248 617 243 628 245C651 246 673 250 685 262C698 272 694 282 689 287C684 292 669 294 653 296', fill: 'none', stroke: '#000', 'stroke-width': 4 });
  o += el('circle', { cx: 653, cy: 292, r: 3.5, fill: '#ccc', stroke: '#888' }) + el('circle', { cx: 653, cy: 296, r: 3.5, fill: '#ccc', stroke: '#888' });

  // economic events
  [[1460, '#f29a38', '2', 8], [1335, '#e8416d', '3', 10, 1], [1391, '#f5b93c', ''], [1414.5, '#f29a38', '19', 7], [1442, '#f29a38', '2', 15], [1536.5, '#e8416d', '2', 10], [1581.5, '#f5b93c', '4', 10]].forEach(([x, c, n, dx, eu]) => {
    o += el('circle', { cx: x, cy: 491.5, r: 12, fill: '#fff', stroke: c, 'stroke-width': 2 });
    o += el('circle', { cx: x, cy: 491.5, r: 9, fill: eu ? '#3d4f9f' : '#fff' });
    if (eu) o += el('circle', { cx: x, cy: 491.5, r: 5.5, fill: 'none', stroke: '#f4d34c', 'stroke-width': 1.5, 'stroke-dasharray': '1.5 2.8' });
    else o += el('path', { d: `M${x} 484h7M${x} 488.5h9M${x - 9} 493.5h18M${x - 7} 498h14`, stroke: '#e2465e', 'stroke-width': 2.6 }) + rect(x - 8, 483, 9, 9, '#3f82dc') + el('path', { d: `M${x - 8} 487h9M${x - 4} 483v9`, stroke: '#bcd8f8' });
    if (n) o += rect(x + dx - 5, 478, n.length * 7 + 1, 11, '#fff') + text(x + dx - 4 + n.length * 3.5, 487.5, n, 'fill:#111;font-size:11px');
  });

  // oscillator pane
  o += rect(132, 577, 874, 79, '#f0e4f1');
  o += hl(132, 1006, 577, '#4eb0dd', 4) + hl(132, 1006, 655.5, '#4eb0dd', 4) + hl(132, 1006, 714.3, '#62bcd8', 2);
  o += hl(132, FAR, 518.5, '#f01818', 2, '4 2') + hl(132, FAR, 617, '#222', 2, '4 2') + hl(132, FAR, 564, '#0a840a', 4, '8 4');
  const olive = [...px('397,100 420,55 437,210 455,55 485,420 520,45 537,330 552,180 570,390 605,120 640,615 670,35 705,350 740,325 760,370 775,480 803,320 825,430 840,636 855,642 873,642 905,520 925,585 940,573 956,612 972,570 988,595 1005,605 1022,625 1050,470 1074,240 1090,635 1107,200 1125,320 1140,55 1157,575 1190,85 1207,55 1240,300 1257,240 1274,260 1292,350 1308,207 1342,225 1375,320 1391,165 1425,225 1442,370 1458,60 1475,200 1490,340', A2),
    ...px('10,380 25,300 45,420 58,565 72,550 88,430 105,530 125,420 155,460 168,433 185,445 200,435 220,300 236,400 253,60 285,610 300,645 316,260 332,195 348,270 364,415 380,395 397,325 412,405 428,475 444,460 463,520 480,300 510,180 542,652 558,570 575,60 590,65 606,180 622,360 638,60 655,640 673,640 690,550 705,515 722,615 738,560 753,300 785,500 803,595 820,575 835,510 866,580 883,480 900,355 933,625 950,380 965,320 982,62 997,58 1013,95 1030,170 1046,400 1076,645 1092,450 1110,570 1128,640 1143,610 1160,550 1175,553 1192,515 1208,535 1225,450 1240,340 1255,365 1270,350 1287,285 1303,385 1320,220 1338,58 1355,58 1370,190 1385,220 1402,60 1420,330 1435,575 1450,60 1465,58', B2)];
  const pink = [...px('397,70 415,55 425,70 450,200 487,350 520,65 560,330 605,50 640,300 690,120 712,390 723,400 740,310 765,420 803,290 823,390 858,642 873,642 905,500 940,642 1022,642 1040,480 1060,410 1090,600 1107,470 1140,310 1157,500 1175,440 1207,260 1222,230 1240,300 1257,230 1274,130 1292,200 1308,60 1340,80 1375,185 1391,60 1408,60 1425,55 1442,120 1458,65 1475,95 1490,70', A2),
    ...px('12,88 25,55 45,140 70,260 90,170 107,230 122,170 138,183 153,230 170,190 185,165 200,155 220,250 236,330 253,220 285,510 300,565 316,155 348,55 364,245 380,215 397,150 412,330 428,385 444,365 463,455 480,155 510,100 528,290 543,385 558,340 575,110 590,50 610,150 622,280 640,200 655,640 673,640 690,550 705,520 722,585 738,585 753,330 785,500 803,580 820,550 835,480 866,550 883,450 900,370 933,650 950,450 997,240 1013,235 1030,300 1046,470 1076,580 1092,400 1128,645 1143,590 1160,515 1175,515 1192,455 1208,500 1240,235 1270,300 1287,330 1303,370 1330,345 1355,255 1370,330 1387,345 1402,190 1420,330 1435,400 1450,60', B2)];
  const wideA = px('397,165 420,105 455,120 500,250 520,205 537,145 570,150 605,210 640,260 690,180 740,230 790,275 820,245 860,345 880,510 893,570 905,545 940,540 956,570 1018,597 1060,520 1090,430 1140,440 1190,400 1222,270 1257,330 1292,345 1342,310 1375,335 1425,290 1442,330 1488,180 1508,240', A2);
  const wideB = px('25,240 72,330 105,325 150,297 200,297 236,310 253,220 300,325 348,165 380,230 397,265 430,255 463,300 510,170 542,310 558,340 590,200 622,270 640,250 673,410 688,550 705,515 738,505 753,440 770,350 803,460 820,508 866,498 900,415 933,460 950,497 965,480 982,400 997,255 1028,100 1046,240 1076,460 1128,500 1145,562 1175,545 1192,500 1208,493 1240,400 1270,325 1287,310 1303,335 1325,350 1338,350 1355,285 1370,255 1387,265 1402,250 1435,330 1467,208', B2);
  const maBlue = [...px('397,330 440,312 500,315 560,300 640,292 700,285 803,290 860,318 920,345 985,390 1080,400 1195,388 1240,380 1260,370 1300,368 1400,350 1490,328', A2), ...px('70,320 200,315 300,315 397,305 463,300 560,298 640,290 690,318 722,330 770,362 803,388 866,383 900,380 950,388 985,382 1028,358 1110,358 1140,372 1180,405 1208,412 1270,407 1303,385 1370,370 1435,370 1467,335', B2)];
  const maOrange = [...px('397,325 460,315 560,298 640,290 803,290 860,320 985,396 1195,385 1300,365 1400,345 1490,322', A2), ...px('70,315 200,310 300,318 397,298 463,298 560,295 640,295 690,335 753,355 800,372 866,375 950,380 1000,360 1040,347 1080,362 1110,372 1140,400 1190,410 1225,407 1270,385 1340,375 1435,370 1467,312', B2)];
  const trend = [...px('397,315 420,295 437,318 455,300 487,352 520,275 537,290 552,270 570,312 605,285 640,330 670,275 720,310 740,290 770,318 803,290 825,310 860,390 880,400 905,365 930,400 1050,420 1074,365 1090,400 1107,375 1125,385 1140,365 1160,430 1205,390 1222,340 1240,360 1257,350 1292,370 1308,342 1342,350 1375,368 1391,325 1425,320 1442,340 1458,305 1490,313', A2),
    ...px('5,312 25,290 58,338 90,320 105,325 122,300 153,315 200,303 236,325 253,270 270,330 300,355 316,295 348,272 364,300 397,290 430,320 463,328 470,290 510,280 542,320 558,315 590,250 622,295 640,290 655,380 673,415 688,390 705,383 722,403 738,403 753,325 770,355 803,403 835,378 866,395 900,355 933,420 950,380 965,370 997,300 1013,303 1028,325 1050,375 1076,408 1092,370 1110,385 1128,460 1160,428 1175,427 1192,410 1208,415 1240,345 1270,375 1287,368 1303,390 1338,378 1355,355 1387,380 1402,340 1435,380 1450,200', B2)];
  const wide = [...wideA, ...wideB];
  o += line(wide.map(([x, y]) => [x + 5, y]), '#f79a50', 1);
  o += line(wide, '#ff9a48', 5, { opacity: .9 });
  for (let i = 1; i < wide.length; i++) {
    const rising = wide[i][1] < wide[i - 1][1] - 4;
    if (rising && wide[i][1] > 552) o += line([wide[i - 1], wide[i]], '#4444f4', 5, { opacity: .85 });
  }
  ['655,350 688,550', '803,460 820,508', '933,460 950,497', '1128,500 1145,562', '364,200 380,230', '1303,335 1325,350', '45,280 72,330'].forEach(s => o += line(px(s, B2), '#4444f4', 5));
  o += line(pink, '#ee48ee', 2, { opacity: .85 }) + line(olive, '#90902c', 2, { opacity: .8 });
  o += line(maOrange, '#f57b12', 3) + line(maBlue, '#2b82e8', 3);
  for (let i = 1; i < trend.length; i++) o += line([trend[i - 1], trend[i]], trend[i][1] > trend[i - 1][1] ? '#dc2028' : '#2f7d3c', 4, { opacity: .85, 'stroke-linecap': 'round' });
  [[146, 22], [180, 22], [202, 23], [225, 20], [242, 21], [509, 21], [565, 20], [585, 19], [631, 22], [671, 22], [704, 22]].forEach(([x, w]) => {
    const c = x + w / 2 - 1, s = 'fill:#5a0808;font-size:13px';
    o += rect(x, 527, w, 68, '#ff2020', { opacity: .76, rx: 1 });
    o += text(c, 539, 'S', s) + text(c, 552, 'E', s) + text(c, 565, 'L', s) + text(c + 3, 578, 'L', s) + text(c + 1, 592, 'Nn', s);
  });

  // volume pane
  const colors = { g: '#a9d3aa', k: '#a4a4a4', s: '#77779c', o: '#a6a590', b: '#2c2cf5', m: '#fa3efa', t: '#7fb3c0', y: '#fafa30' };
  const volA = '485,397s 501,400s 518,390g 535,400s 551,405s 568,405s 585,383g 603,364g 620,365g 637,333k 653,313g 670,340g 687,307g 703,333g 720,319g 737,357g 753,372b 769,343m 786,346g 802,363b 819,360o 837,350k 854,347k 871,347k 888,372o 904,372o 920,340m 937,340k 954,370o 970,350k 987,337k 1004,316k 1020,333k 1038,340m 1056,316g 1072,345g 1089,280k 1105,316g 1122,319k 1139,340o 1155,315k 1171,240g 1188,286k 1205,323b 1221,290g 1238,350o 1255,335o 1272,362o 1290,340o 1307,355o 1323,360o 1340,362o 1357,360o 1374,364o 1391,362o 1407,354o 1424,358o 1440,247g 1456,247g 1473,253g 1490,264g 1507,335o';
  const volB = '23,410o 39,415o 55,387o 71,400o 120,410o 136,398o 168,418o 184,412o 200,408o 216,400o 232,393o 248,398o 264,398o 280,395o 297,385s 314,370g 330,397b 346,397b 362,407o 378,407o 394,410o 410,415o 426,405o 442,405o 458,408o 476,398t 495,410o 511,415o 527,418o 543,413o 559,415o 575,410o 590,403s 606,400s 622,397s 638,397s 655,337k 672,324k 688,319k 704,346k 720,313m 736,273k 752,290g 768,303g 784,313m 800,319k 816,352b 832,373o 848,373o 864,373o 880,380o 898,396o 914,360o 930,358o 946,370o 962,380o 978,342t 994,370o 1010,370o 1026,390o 1042,327g 1058,324k 1075,292k 1091,303k 1109,316k 1125,264k 1141,319k 1158,346b 1174,343b 1190,346b 1206,373o 1222,350o 1238,316g 1254,350o 1270,360o 1286,358o 1302,355o 1318,360o 1334,363o 1350,390o 1366,393o 1382,383o 1398,370o 1414,380o 1432,373o 1449,57g 1471,350y';
  const volArea = [...px('397,402 470,404 570,403 620,400 660,387 700,375 760,368 820,360 888,350 960,345 1040,345 1140,335 1205,320 1260,322 1290,320 1420,332 1440,330 1490,315', A3), ...px('0,322 100,348 160,362 220,370 255,375 300,393 350,403 560,404 640,403 700,392 780,373 850,352 900,346 980,342 1030,350 1080,350 1130,347 1230,342 1300,335 1360,340 1435,355 1467,346', B3)];
  const bars = keep => [[volA, A3], [volB, B3]].forEach(([s, g]) => s.split(' ').forEach(b => {
    const k = b.slice(-1);
    if (!keep(k)) return;
    const [[x, y]] = px(b.slice(0, -1), g);
    o += rect((x - 2.3).toFixed(1), y.toFixed(1), 4.6, (859.5 - y).toFixed(1), colors[k]);
  }));
  bars(k => !'obmy'.includes(k));
  o += area(volArea, 'rgba(76,76,255,.5)', 859.5);
  bars(k => 'obmy'.includes(k));
  o += line([...px('397,373 440,373 470,376 950,372 1120,366 1240,360 1320,358 1490,358', A3), ...px('0,360 300,365 500,371 640,372 1080,368 1467,362', B3)], '#f29a4a', 1.5);
  o += line([...px('397,367 440,370 940,370 960,367 1120,365 1330,363 1490,361', A3), ...px('0,360 300,365 500,371 640,372 780,372 900,370 1080,370 1200,365 1467,363', B3)], '#251545', 1.5);
  o += line([...px('397,404 440,402 470,405 510,402 600,400 640,388 700,368 760,357 820,358 900,358 950,355 1040,348 1140,335 1180,318 1240,318 1320,332 1420,340 1440,335 1470,315 1495,310', A3), ...px('0,312 60,340 105,358 160,375 240,386 300,385 350,388 400,397 480,400 560,404 645,403 700,384 750,355 800,345 900,355 980,362 1040,360 1080,350 1125,333 1200,335 1280,340 1340,350 1435,360 1450,330 1467,333', B3)], '#dc2c2c', 1.3);
  o += hl(132, 856, 859.5, '#cc1f12', 4) + hl(856, 907, 859.5, '#117a1f', 3);
  [134, 140, 146, 151, 157, 178, 184, 229, 235, 620, 676, 709, 720, 849, 854, 999, 1005].forEach(x => o += el('circle', { cx: x, cy: 854, r: 2, fill: '#c23a4c' }));
  [[134, '#d00'], [140, '#f66'], [146, '#f66'], [151, '#d22'], [157, '#f66'], [168, '#3ca5cf'], [179, '#f66'], [184, '#f66'], [229, '#f66'], [235, '#f66'], [346, '#197a2a'], [486, '#197a2a'], [553, '#e4d'], [564, '#e4d'], [620, '#f66'], [636, '#e4d'], [642, '#e4d'], [670, '#e4d'], [676, '#e00'], [709, '#f66'], [720, '#f66'], [849, '#f66'], [854, '#f66'], [999, '#197a2a']].forEach(([x, c]) => o += rect(x - 2, 737, 4, 4, c, { rx: 1 }));
  [296, 302, 307, 313, 318, 324, 329, 335, 341, 346, 737, 894, 899, 905].forEach(x => o += rect(x - 2, 863, 4, 3, '#5050e0', { rx: 1 }));
  [273, 419, 932].forEach(x => o += rect(x - 2, 863, 4, 3, '#dd20dd'));
  [681, 798].forEach(x => o += rect(x - 2, 863, 4, 3, '#3ca5cf'));
  const green = 'fill:#157a1c;font-size:13px', cyan = 'fill:#45abd6;font-size:13px', red = 'fill:#cc1414;font-size:13px', mag = 'fill:#e450e4;font-size:13px';
  [346, 486, 1000].forEach(x => o += text(x, 753, 'MAJOR', green) + text(x, 766, 'UP', cyan));
  o += text(167, 766, 'UP', cyan) + text(133, 766, 'lly', red, 'start') + text(151, 766, 'silly', red) + text(675, 766, 'silly', red);
  const letters = [['P', 753], ['r', 780], ['e', 807], ['p', 820], ['a', 833], ['r', 847], ['e', 860]];
  [553.5, 564.5, 636, 643, 671.5].forEach(x => letters.forEach(([s, y]) => o += text(x, y, s, mag)));

  // separators, crosshair and time axis
  o += vl(1441.5, 100, 868, '#888', 1, '6 6');
  o += hl(130, FAR, 506.5, '#4a4a4a') + hl(130, FAR, 725.5, '#4a4a4a') + hl(130, FAR, 867.5, '#555');
  o += rect(586, 868, 111.5, 26, '#d2e0f7');
  times.forEach(([x, s]) => o += vl(x, 868, 871, '#555') + text(x, 887, s, s === 'Feb' ? 'font-weight:700' : ''));
  o += rect(1387, 867, 108, 25, '#4c525e') + vl(1441.5, 867, 871, '#fff') + text(1394, 884, '31 Jan \'19', 'fill:#fff', 'start') + text(1490, 884, '15:45', 'fill:#fff', 'end');
  o += rect(1777.5, 238, 19, 19, '#4c525e') + vl(1786.5, 242, 253, '#fff') + hl(1781, 1792, 247.5, '#fff');
  return el('g', { transform: 'translate(-130 -100)' }, o);
}

function axis(side) {
  const left = side === 'left', edge = left ? 129.5 : 1796.5;
  const tx = left ? 122 : 1805, anchor = left ? 'end' : 'start';
  const bx = left ? 69 : 1796, bw = 61;
  const tick = y => hl(left ? 125 : 1797, left ? 130 : 1801, y, '#555');
  let o = rect(left ? 63 : 1797, 243, 66, 54, '#d2e0f7');
  rows.forEach(([s, y]) => { if (s) o += text(tx, y + 4, s, '', anchor) + tick(y); });
  o += el('clipPath', { id: 'clip-' + side }, rect(0, 100, FAR, 406, '#000'));
  o += el('g', { 'clip-path': `url(#clip-${side})` }, text(tx, 510, '1.14500', '', anchor));
  o += hl(0, FAR, 506.5, '#4a4a4a') + hl(0, FAR, 725.5, '#4a4a4a') + vl(edge, 100, 868, '#555');
  [[238, '1.14777', '#4c525e'], [260, '1.14753', '#000'], [340, '1.14667', '#e75a5c']].forEach(([y, s, c]) => {
    o += rect(bx, y, bw, 19, c) + text(tx, y + 13.5, s, 'fill:#fff', anchor) + hl(left ? 126 : 1797, left ? 130 : 1801, y + 9.5, '#ddd');
  });
  o += rect(left ? 69 : 1814, 280, 43, 19, '#000') + text(left ? 77 : 1819, 293.5, '10:08', 'fill:#fff', 'start');
  return el('g', { transform: `translate(${left ? -62 : -1796} -100)` }, o);
}

document.getElementById('plot').innerHTML = plot();
document.getElementById('axis-left').innerHTML = axis('left');
document.getElementById('axis-right').innerHTML = axis('right');
```
